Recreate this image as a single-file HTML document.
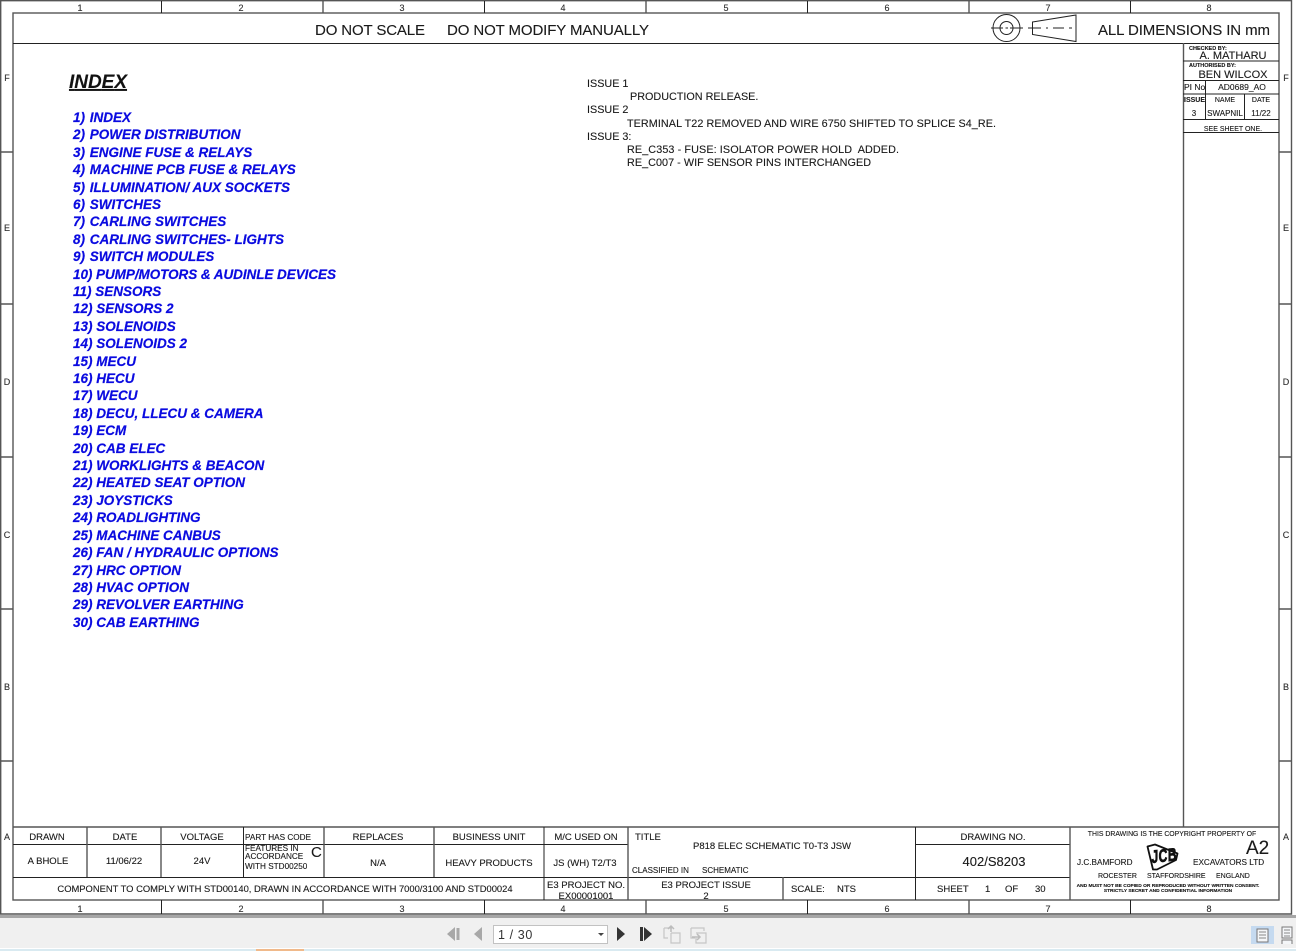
<!DOCTYPE html>
<html><head><meta charset="utf-8"><title>P818 ELEC SCHEMATIC</title>
<style>
html,body{margin:0;padding:0;background:#fff;width:1296px;height:951px;overflow:hidden}
svg{display:block;position:absolute;left:0;top:0}
text{font-family:"Liberation Sans",sans-serif;fill:#1a1a1a;stroke:#1a1a1a;stroke-width:.12px}
.t{font-size:11px;text-anchor:middle}
.n{font-size:9px;text-anchor:middle;fill:#333}
.i{font-size:13.5px;font-weight:bold;font-style:italic;fill:#0a0ae0;stroke:#0a0ae0;stroke-width:.2px}
.r{font-size:10.8px}
.m{stroke:#555;stroke-width:1.4;fill:none}
.b{stroke:#222;stroke-width:1;fill:none}
</style></head><body>
<svg width="1296" height="951" viewBox="0 0 1296 951" xmlns="http://www.w3.org/2000/svg">
<rect width="1296" height="951" fill="#fff"/>
<!-- viewer toolbar -->
<rect x="0" y="915" width="1296" height="4" fill="#a6a6a6"/>
<rect x="0" y="918" width="1296" height="30" fill="#f0f0f0"/>
<rect x="0" y="949" width="1296" height="2" fill="#d9eaf1"/>
<rect x="256" y="949" width="48" height="2" fill="#f0b98a"/>
<!-- frame -->
<path class="m" d="M0.7 914V0.7H1291.5V914Z"/>
<rect class="m" x="13" y="13" width="1266" height="887"/>
<path class="b" d="M13 43.5H1279"/>
<path class="b" d="M161.5 1V13M484.5 1V13M807.5 1V13M1130.5 1V13M161.5 900V914M484.5 900V914M807.5 900V914M1130.5 900V914"/>
<path class="m" d="M323 1V13M646 1V13M969 1V13M323 900V914M646 900V914M969 900V914"/>
<path class="m" d="M1 152H13M1 304H13M1 457H13M1 609H13M1 761H13M1279 152H1291M1279 304H1291M1279 457H1291M1279 609H1291M1279 761H1291"/>
<g>
<text class="n" x="80" y="11">1</text><text class="n" x="241" y="11">2</text><text class="n" x="402" y="11">3</text><text class="n" x="563" y="11">4</text><text class="n" x="726" y="11">5</text><text class="n" x="887" y="11">6</text><text class="n" x="1048" y="11">7</text><text class="n" x="1209" y="11">8</text>
<text class="n" x="80" y="912">1</text><text class="n" x="241" y="912">2</text><text class="n" x="402" y="912">3</text><text class="n" x="563" y="912">4</text><text class="n" x="726" y="912">5</text><text class="n" x="887" y="912">6</text><text class="n" x="1048" y="912">7</text><text class="n" x="1209" y="912">8</text>
<text class="n" x="7" y="81">F</text><text class="n" x="7" y="231">E</text><text class="n" x="7" y="385">D</text><text class="n" x="7" y="538">C</text><text class="n" x="7" y="690">B</text><text class="n" x="7" y="840">A</text>
<text class="n" x="1286" y="81">F</text><text class="n" x="1286" y="231">E</text><text class="n" x="1286" y="385">D</text><text class="n" x="1286" y="538">C</text><text class="n" x="1286" y="690">B</text><text class="n" x="1286" y="840">A</text>
</g>
<!-- header -->
<text x="315" y="35" font-size="15" textLength="110">DO NOT SCALE</text>
<text x="447" y="35" font-size="15" textLength="202">DO NOT MODIFY MANUALLY</text>
<text x="1098" y="35" font-size="15" textLength="172">ALL DIMENSIONS IN mm</text>
<circle class="b" cx="1006.500" cy="28" r="13.500"/><circle class="b" cx="1006.500" cy="28" r="6.500"/>
<path class="b" d="M991 28H1003M1005.500 28H1008M1010 28H1023"/>
<path class="b" d="M1032.500 22L1076 15V41.500L1032.500 34.500ZM1028 28H1041M1046 28H1048M1053 28H1064M1069 28H1072"/>
<!-- index -->
<text x="69" y="88" font-size="19" font-weight="bold" font-style="italic" text-decoration="underline" style="fill:#111" textLength="58">INDEX</text>
<text class="i" x="73" y="122">1) <tspan dx="1">INDEX</tspan></text>
<text class="i" x="73" y="139">2) <tspan dx="1">POWER DISTRIBUTION</tspan></text>
<text class="i" x="73" y="157">3) <tspan dx="1">ENGINE FUSE &amp; RELAYS</tspan></text>
<text class="i" x="73" y="174">4) <tspan dx="1">MACHINE PCB FUSE &amp; RELAYS</tspan></text>
<text class="i" x="73" y="192">5) <tspan dx="1">ILLUMINATION/ AUX SOCKETS</tspan></text>
<text class="i" x="73" y="209">6) <tspan dx="1">SWITCHES</tspan></text>
<text class="i" x="73" y="226">7) <tspan dx="1">CARLING SWITCHES</tspan></text>
<text class="i" x="73" y="244">8) <tspan dx="1">CARLING SWITCHES- LIGHTS</tspan></text>
<text class="i" x="73" y="261">9) <tspan dx="1">SWITCH MODULES</tspan></text>
<text class="i" x="73" y="279" textLength="263">10) PUMP/MOTORS &amp; AUDINLE DEVICES</text>
<text class="i" x="73" y="296">11) SENSORS</text>
<text class="i" x="73" y="313">12) SENSORS 2</text>
<text class="i" x="73" y="331">13) SOLENOIDS</text>
<text class="i" x="73" y="348">14) SOLENOIDS 2</text>
<text class="i" x="73" y="366">15) MECU</text>
<text class="i" x="73" y="383">16) HECU</text>
<text class="i" x="73" y="400">17) WECU</text>
<text class="i" x="73" y="418">18) DECU, LLECU &amp; CAMERA</text>
<text class="i" x="73" y="435">19) ECM</text>
<text class="i" x="73" y="453">20) CAB ELEC</text>
<text class="i" x="73" y="470">21) WORKLIGHTS &amp; BEACON</text>
<text class="i" x="73" y="487">22) HEATED SEAT OPTION</text>
<text class="i" x="73" y="505">23) JOYSTICKS</text>
<text class="i" x="73" y="522">24) ROADLIGHTING</text>
<text class="i" x="73" y="540">25) MACHINE CANBUS</text>
<text class="i" x="73" y="557">26) FAN / HYDRAULIC OPTIONS</text>
<text class="i" x="73" y="575">27) HRC OPTION</text>
<text class="i" x="73" y="592">28) HVAC OPTION</text>
<text class="i" x="73" y="609">29) REVOLVER EARTHING</text>
<text class="i" x="73" y="627">30) CAB EARTHING</text>
<!-- issues -->
<text class="r" x="587" y="87">ISSUE 1</text>
<text class="r" x="630" y="100">PRODUCTION RELEASE.</text>
<text class="r" x="587" y="113">ISSUE 2</text>
<text class="r" x="627" y="127" textLength="369">TERMINAL T22 REMOVED AND WIRE 6750 SHIFTED TO SPLICE S4_RE.</text>
<text class="r" x="587" y="140">ISSUE 3:</text>
<text class="r" x="627" y="153" textLength="272" xml:space="preserve">RE_C353 - FUSE: ISOLATOR POWER HOLD  ADDED.</text>
<text class="r" x="627" y="166" textLength="244">RE_C007 - WIF SENSOR PINS INTERCHANGED</text>
<!-- right column -->
<path class="m" d="M1183.500 43V827"/>
<path class="b" d="M1183 61H1279M1183 80.500H1279M1183 94H1279M1183 119.500H1279M1183 132.500H1279M1205.500 80V119M1244.500 94V119"/>
<text x="1189" y="50" font-size="5.500" font-weight="bold">CHECKED BY:</text>
<text class="t" x="1233" y="59">A. MATHARU</text>
<text x="1189" y="67" font-size="5.500" font-weight="bold">AUTHORISED BY:</text>
<text class="t" x="1233" y="78">BEN WILCOX</text>
<text x="1184" y="90" font-size="8.500">PI No</text>
<text class="t" x="1242" y="90" style="font-size:8.500px">AD0689_AO</text>
<text x="1184" y="102" font-size="7" font-weight="bold">ISSUE</text>
<text class="t" x="1225" y="102" style="font-size:7px">NAME</text>
<text class="t" x="1261" y="102" style="font-size:7px">DATE</text>
<text class="t" x="1194" y="116" style="font-size:8px">3</text>
<text class="t" x="1225" y="116" style="font-size:8px">SWAPNIL</text>
<text class="t" x="1261" y="116" style="font-size:8px">11/22</text>
<text class="t" x="1233" y="131" style="font-size:7px">SEE SHEET ONE.</text>
<!-- title block -->
<path class="m" d="M13 827H1279"/>
<path class="b" d="M13 844.500H628M915 844.500H1070M13 877.500H1070"/>
<path class="m" d="M87 827V877M161 827V877M324 827V877M434 827V877M628 827V900M783 877V900M1070 827V900"/>
<path class="b" d="M243.500 827V877M544 827V900M915.500 827V900"/>
<text class="t" x="47" y="840" style="font-size:9.500px">DRAWN</text>
<text class="t" x="125" y="840" style="font-size:9.500px">DATE</text>
<text class="t" x="202" y="840" style="font-size:9.500px">VOLTAGE</text>
<text x="245" y="840" font-size="8.200">PART HAS CODE</text>
<text x="245" y="851" font-size="8.200">FEATURES IN</text>
<text x="245" y="859" font-size="8.200">ACCORDANCE</text>
<text x="245" y="869" font-size="8.200">WITH STD00250</text>
<text x="311" y="857" font-size="15">C</text>
<text class="t" x="378" y="840" style="font-size:9.500px">REPLACES</text>
<text class="t" x="489" y="840" style="font-size:9.500px">BUSINESS UNIT</text>
<text class="t" x="586" y="840" style="font-size:9.500px">M/C USED ON</text>
<text x="635" y="840" font-size="9.500">TITLE</text>
<text class="t" x="772" y="849" style="font-size:9.500px">P818 ELEC SCHEMATIC T0-T3 JSW</text>
<text x="632" y="873" font-size="8">CLASSIFIED IN</text>
<text x="702" y="873" font-size="8">SCHEMATIC</text>
<text class="t" x="993" y="840" style="font-size:9.500px">DRAWING NO.</text>
<text class="t" x="48" y="864" style="font-size:9.500px">A BHOLE</text>
<text class="t" x="124" y="864" style="font-size:9.500px">11/06/22</text>
<text class="t" x="202" y="864" style="font-size:9.500px">24V</text>
<text class="t" x="378" y="866" style="font-size:9.500px">N/A</text>
<text class="t" x="489" y="866" style="font-size:9.500px">HEAVY PRODUCTS</text>
<text class="t" x="585" y="866" style="font-size:9.500px">JS (WH) T2/T3</text>
<text class="t" x="994" y="866" style="font-size:13px">402/S8203</text>
<text class="t" x="285" y="892" style="font-size:9.400px">COMPONENT TO COMPLY WITH STD00140, DRAWN IN ACCORDANCE WITH 7000/3100 AND STD00024</text>
<text class="t" x="586" y="888" style="font-size:9.500px">E3 PROJECT NO.</text>
<text class="t" x="586" y="899" style="font-size:9.500px">EX00001001</text>
<text class="t" x="706" y="888" style="font-size:9.500px">E3 PROJECT ISSUE</text>
<text class="t" x="706" y="899" style="font-size:9.500px">2</text>
<text x="791" y="892" font-size="9.500">SCALE:</text>
<text x="837" y="892" font-size="9.500">NTS</text>
<text x="937" y="892" font-size="9.500">SHEET</text>
<text x="985" y="892" font-size="9.500">1</text>
<text x="1005" y="892" font-size="9.500">OF</text>
<text x="1035" y="892" font-size="9.500">30</text>
<!-- copyright -->
<text class="t" x="1172" y="836" style="font-size:6.900px">THIS DRAWING IS THE COPYRIGHT PROPERTY OF</text>
<text x="1246" y="854" font-size="19">A2</text>
<text x="1077" y="865" font-size="8.200">J.C.BAMFORD</text>
<text x="1193" y="865" font-size="8.200">EXCAVATORS LTD</text>
<text x="1098" y="878" font-size="7">ROCESTER</text>
<text x="1147" y="878" font-size="7">STAFFORDSHIRE</text>
<text x="1216" y="878" font-size="7">ENGLAND</text>
<text class="t" x="1168" y="887" style="font-size:4.850px;font-weight:bold">AND MUST NOT BE COPIED OR REPRODUCED WITHOUT WRITTEN CONSENT.</text>
<text class="t" x="1168" y="892" style="font-size:4.850px;font-weight:bold">STRICTLY SECRET AND CONFIDENTIAL INFORMATION</text>
<!-- JCB logo -->
<path d="M1147.500 846.500L1155 844.500L1177.500 853.500L1176 860L1157 869.500L1153 869.500Z" fill="#fff" stroke="#111" stroke-width="1.800" stroke-linejoin="round"/>
<text transform="translate(1151.500 863) skewY(-6) scale(1 1.500)" font-size="12" font-weight="bold" style="fill:#111;stroke:#111;stroke-width:.5px" textLength="25">JCB</text>
<!-- page nav -->
<path d="M455 927V941L447 934ZM456.500 928H459.500V940H456.500Z" fill="#a8a8a8"/>
<path d="M482 927V941L474 934Z" fill="#a8a8a8"/>
<rect x="493.500" y="925.500" width="114" height="18" fill="#fff" stroke="#c2c2c2"/>
<text x="498" y="939" font-size="12.500" style="fill:#333;stroke:none;letter-spacing:.6px">1 / 30</text>
<path d="M598 933H604L601 936Z" fill="#444"/>
<path d="M617 927V941L625 934Z" fill="#333"/>
<path d="M640 927H643V941H640ZM644 927L652 934L644 941Z" fill="#333"/>
<g fill="none" stroke="#c6c6c6" stroke-width="1.200">
<path d="M664 928H672M664 928V938H668M671 933H680V943H671V933"/>
<path d="M691 928H704V931M691 928V938H695M696 933H706V943H696V938"/>
</g>
<path d="M671 927V932M668 929L671 926L674 929" fill="none" stroke="#bcbcbc" stroke-width="1.500"/>
<path d="M692 937H700M697 934L700 937L697 940" fill="none" stroke="#bcbcbc" stroke-width="1.500"/>
<!-- view buttons -->
<rect x="1251" y="926" width="23" height="18" fill="#c5daf0"/>
<rect x="1257" y="929" width="11" height="13" fill="#f4f6f8" stroke="#777"/>
<path d="M1259 932H1266M1259 935H1266M1259 938H1266" stroke="#888" stroke-width="1"/>
<rect x="1282" y="927" width="10" height="11" fill="#f4f6f8" stroke="#777"/>
<path d="M1284 930H1290M1284 933H1290M1284 936H1290" stroke="#888" stroke-width="1"/>
<path d="M1282 944V940H1292V944" fill="#f4f6f8" stroke="#777"/>
</svg>
</body></html>
